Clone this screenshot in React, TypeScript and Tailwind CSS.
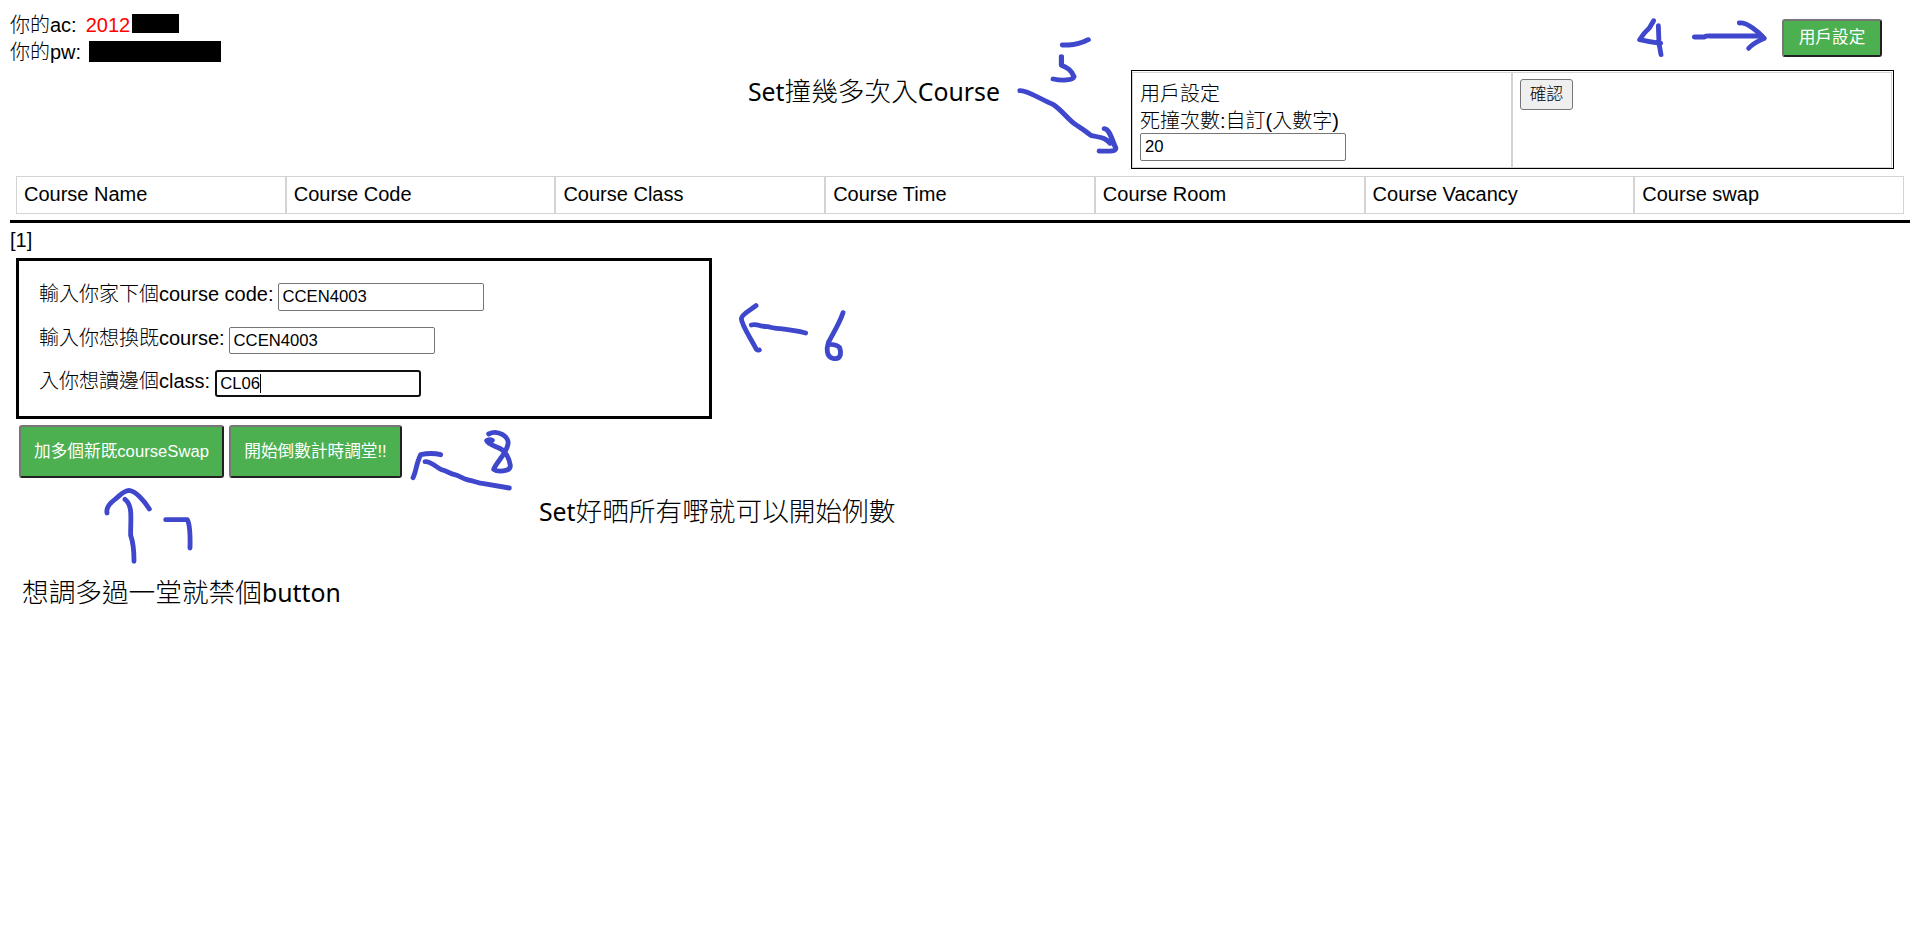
import type { ReactNode } from "react";

const COLUMNS = [
  "Course Name",
  "Course Code",
  "Course Class",
  "Course Time",
  "Course Room",
  "Course Vacancy",
  "Course swap",
];

const INPUT =
  "block w-[206px] shrink-0 rounded-[2px] border border-[#767676] bg-white px-1 text-[16.67px] text-black outline-none";

const GREEN =
  "flex items-center justify-center rounded-[3px] border-2 border-t-[#767676] border-l-[#767676] border-r-[#212121] border-b-[#212121] bg-[#4caf50] text-[16.67px] leading-5 text-white whitespace-nowrap";

function FormRow({ label, children }: { label: string; children: ReactNode }) {
  return (
    <div className="flex items-start gap-1">
      <span className="-mt-0.5 -mb-2 whitespace-nowrap">{label}</span>
      {children}
    </div>
  );
}

function Note({ className, children }: { className: string; children: ReactNode }) {
  return (
    <div
      className={
        "absolute whitespace-nowrap font-['Noto_Sans_CJK_TC',sans-serif] text-[26.67px] font-light leading-9 text-black " +
        className
      }
    >
      {children}
    </div>
  );
}

function Latin({ children }: { children: ReactNode }) {
  return <span className="font-['Noto_Sans',sans-serif] text-[24.8px] font-normal">{children}</span>;
}

function Ink() {
  return (
    <svg
      className="pointer-events-none absolute top-0 left-0"
      width="1920"
      height="925"
      viewBox="0 0 1920 925"
      fill="none"
      stroke="#3f48cc"
      strokeWidth="14.5"
      strokeLinecap="round"
      strokeLinejoin="round"
    >
      <g transform="translate(1560 0) scale(0.33333)">
        <path d="M281 62L268 84Q250 100 239 119Q268 126 302 130M295 77L297 130L303 164" />
        <path d="M403 111H432Q440 107 450 108H606M538 69C560 66 595 94 613 115C596 123 580 128 566 145" />
      </g>
      <g transform="translate(1000 20) scale(0.35714 0.33333)">
        <path d="M175 75H192Q220 74 247 59M172 110V136C190 144 200 150 207 170C204 181 175 183 149 177" />
        <path d="M56 212C75 210 110 236 150 254C175 272 190 298 212 314C230 327 240 333 254 346C275 352 296 351 308 370M292 326C308 328 314 362 324 384C324 395 310 394 278 393" />
      </g>
      <g transform="translate(690 250) scale(0.33333)">
        <path d="M198 167C185 178 155 192 154 206C155 225 180 262 196 292Q200 302 208 300M184 225C203 220 210 231 235 230C255 237 292 235 347 249" />
        <path d="M459 188C450 217 426 256 415 278C409 296 409 321 429 325C454 330 454 309 449 293C441 284 430 284 419 283" />
      </g>
      <g transform="translate(0 410) scale(0.33333)">
        <path d="M321 309C318 293 330 279 345 268C360 257 370 242 387 241C407 243 432 271 448 297M375 268C400 288 391 325 392 376C401 400 402 425 402 454" />
        <path d="M497 329H562C569 342 571 375 570 414" />
      </g>
      <g transform="translate(400 410) scale(0.33333)">
        <path d="M39 203C48 188 48 162 62 134C80 130 103 129 122 134M75 155C95 154 105 170 124 179C139 182 150 191 164 194C180 198 188 207 205 210C221 212 234 220 251 221L328 234" />
        <path d="M266 72C293 58 332 80 323 106C316 135 290 155 281 178C290 185 332 188 331 166C328 145 316 124 303 117C288 109 264 103 260 92Q270 87 277 91" />
      </g>
    </svg>
  );
}

export default function App() {
  return (
    <div className="relative h-[925px] w-full overflow-hidden bg-white font-['Liberation_Sans','Noto_Sans_CJK_TC',sans-serif] text-xl leading-[27px] font-normal text-black">
      <header className="flex h-[70px] items-start justify-between pr-[38px] pl-[10px]">
        <div className="pt-3 font-light">
          <div className="flex h-[27px]">
            <span>你的ac:</span>
            <span className="ml-[9px] font-normal text-[#ff0000]">2012</span>
            <span className="mt-0.5 ml-0.5 h-[19px] w-[47px] bg-black" />
          </div>
          <div className="flex h-[27px]">
            <span>你的pw:</span>
            <span className="mt-0.5 ml-2 h-[21px] w-[132px] bg-black" />
          </div>
        </div>
        <button className={GREEN + " mt-[19px] h-[38px] w-[100px]"}>用戶設定</button>
      </header>

      <section className="ml-[1131px] flex h-[99px] w-[763px] border border-black pt-px pr-px">
        <div className="w-[381px] border border-r-2 border-[#d3d3d3] pt-2 pl-[7px] font-light">
          <div>用戶設定</div>
          <div>死撞次數:自訂(入數字)</div>
          <input className={INPUT + " -mt-0.5 h-7"} defaultValue="20" />
        </div>
        <div className="flex-1 border border-l-0 border-[#d3d3d3] pt-1.5 pl-[7px]">
          <button className="flex h-[31px] w-[53px] items-center justify-center rounded-[3px] border border-[#767676] bg-[#efefef] text-[16.67px] leading-5 font-light">
            確認
          </button>
        </div>
      </section>

      <div className="mx-4 mt-[7px] grid h-[38px] grid-cols-7">
        {COLUMNS.map((name) => (
          <div key={name} className="border border-[#d3d3d3] pt-1 pl-[7px]">
            {name}
          </div>
        ))}
      </div>
      <div className="mx-2.5 mt-1.5 h-[3px] bg-black" />

      <div className="mt-1 h-[31px] pl-2.5">[1]</div>
      <section className="ml-4 flex h-[161px] w-[696px] flex-col gap-4 border-[3px] border-black pt-[22px] pl-5 font-light">
        <FormRow label="輸入你家下個course code:">
          <input className={INPUT + " h-7"} defaultValue="CCEN4003" />
        </FormRow>
        <FormRow label="輸入你想換既course:">
          <input className={INPUT + " h-[27px]"} defaultValue="CCEN4003" />
        </FormRow>
        <FormRow label="入你想讀邊個class:">
          <div className="ml-px flex h-[27px] w-[206px] shrink-0 items-center rounded-[3px] border-2 border-[#101010] bg-white pl-[3px] text-[16.67px]">
            <span>CL06</span>
            <span className="h-[19px] w-px bg-black" />
          </div>
        </FormRow>
      </section>

      <div className="mt-1.5 ml-[19px] flex gap-[5px]">
        <button className={GREEN + " h-[53px] w-[205px]"}>加多個新既courseSwap</button>
        <button className={GREEN + " h-[53px] w-[173px]"}>開始倒數計時調堂!!</button>
      </div>

      <Note className="top-[72px] left-[748px]">
        <Latin>Set</Latin>撞幾多次入<Latin>Course</Latin>
      </Note>
      <Note className="top-[492px] left-[539px]">
        <Latin>Set</Latin>好晒所有嘢就可以開始例數
      </Note>
      <Note className="top-[573px] left-[22px]">
        想調多過一堂就禁個<Latin>button</Latin>
      </Note>
      <Ink />
    </div>
  );
}
